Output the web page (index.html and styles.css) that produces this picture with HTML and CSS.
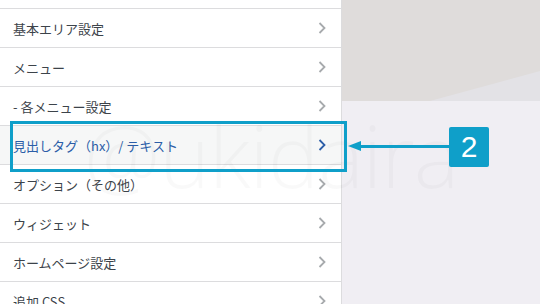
FILE: index.html
```html
<!DOCTYPE html>
<html lang="ja">
  <head>
    <meta charset="UTF-8" />
    <title>カスタマイザー</title>
    <link rel="stylesheet" href="styles.css">
  </head>
  <body>
    <aside class="sidebar">
      <div class="spacer"></div>
      <ul class="menu">
        <li class="row"><span>基本エリア設定</span><svg class="chev" viewBox="0 0 8 12"><polyline points="1.5,1 6.5,6 1.5,11"/></svg></li>
        <li class="row"><span>メニュー</span><svg class="chev" viewBox="0 0 8 12"><polyline points="1.5,1 6.5,6 1.5,11"/></svg></li>
        <li class="row"><span>- 各メニュー設定</span><svg class="chev" viewBox="0 0 8 12"><polyline points="1.5,1 6.5,6 1.5,11"/></svg></li>
        <li class="row active"><span>見出しタグ（hx）/ テキスト</span><svg class="chev" viewBox="0 0 8 12"><polyline points="1.5,1 6.5,6 1.5,11"/></svg></li>
        <li class="row"><span>オプション（その他）</span><svg class="chev" viewBox="0 0 8 12"><polyline points="1.5,1 6.5,6 1.5,11"/></svg></li>
        <li class="row"><span>ウィジェット</span><svg class="chev" viewBox="0 0 8 12"><polyline points="1.5,1 6.5,6 1.5,11"/></svg></li>
        <li class="row"><span>ホームページ設定</span><svg class="chev" viewBox="0 0 8 12"><polyline points="1.5,1 6.5,6 1.5,11"/></svg></li>
        <li class="row"><span>追加 CSS</span><svg class="chev" viewBox="0 0 8 12"><polyline points="1.5,1 6.5,6 1.5,11"/></svg></li>
      </ul>
    </aside>
    <main class="preview">
      <div class="band"></div>
    </main>

    <!-- 注釈 -->
    <div class="watermark">@ukidaira</div>
    <div class="callout-box"></div>
    <div class="callout-arrow"></div>
    <div class="badge">2</div>
  </body>
</html>
```

FILE: styles.css
```css
html,
body {
  margin: 0;
  height: 100%;
  overflow: hidden;
}

body {
  display: flex;
  position: relative;
  font-family: "Noto Sans CJK JP", "Noto Sans", sans-serif;
  background: #f0eef3;
}

.sidebar {
  width: 341px;
  flex-shrink: 0;
  background: #fff;
  border-right: 1px solid #dcdcde;
}

.spacer {
  height: 8px;
  border-bottom: 1px solid #dcdcde;
}

.menu {
  list-style: none;
  margin: 0;
  padding: 0;
}

.row {
  height: 38px;
  display: flex;
  align-items: center;
  justify-content: space-between;
  padding: 0 15px 0 13px;
  border-bottom: 1px solid #dcdcde;
  font-size: 13px;
  color: #3c434a;
}

.row.active {
  background: #f6f7f7;
  color: #2c5ea8;
}

.chev {
  width: 8px;
  height: 12px;
  fill: none;
  stroke: #a7aaad;
  stroke-width: 1.8;
}

.row.active .chev {
  stroke: #2c5ea8;
}

.preview {
  flex: 1;
}

.band {
  position: relative;
  height: 101px;
  background: #dfdcdb;
  overflow: hidden;
}

.band::after {
  content: "";
  position: absolute;
  inset: 0;
  background: #e3e2e6;
  clip-path: polygon(88px 101px, 100% 71px, 100% 100%);
}

.watermark {
  position: absolute;
  left: 84px;
  top: 96px;
  font-family: "Open Sans", sans-serif;
  font-weight: 300;
  font-size: 86px;
  letter-spacing: -1px;
  color: rgba(0, 0, 0, 0.022);
  pointer-events: none;
}

.callout-box {
  position: absolute;
  left: 10px;
  top: 121px;
  width: 331px;
  height: 45px;
  border: 3px solid #0f9fc9;
}

.callout-arrow {
  position: absolute;
  left: 361px;
  top: 145px;
  width: 88px;
  height: 3px;
  background: #0f9fc9;
}

.callout-arrow::before {
  content: "";
  position: absolute;
  left: -13px;
  top: -4px;
  border-top: 5.5px solid transparent;
  border-bottom: 5.5px solid transparent;
  border-right: 13px solid #0f9fc9;
}

.badge {
  position: absolute;
  left: 449px;
  top: 127px;
  width: 40px;
  height: 40px;
  border-radius: 2px;
  background: #0f9fc9;
  color: #fff;
  font-family: "Liberation Sans", sans-serif;
  font-size: 30px;
  line-height: 40px;
  text-align: center;
}
```
